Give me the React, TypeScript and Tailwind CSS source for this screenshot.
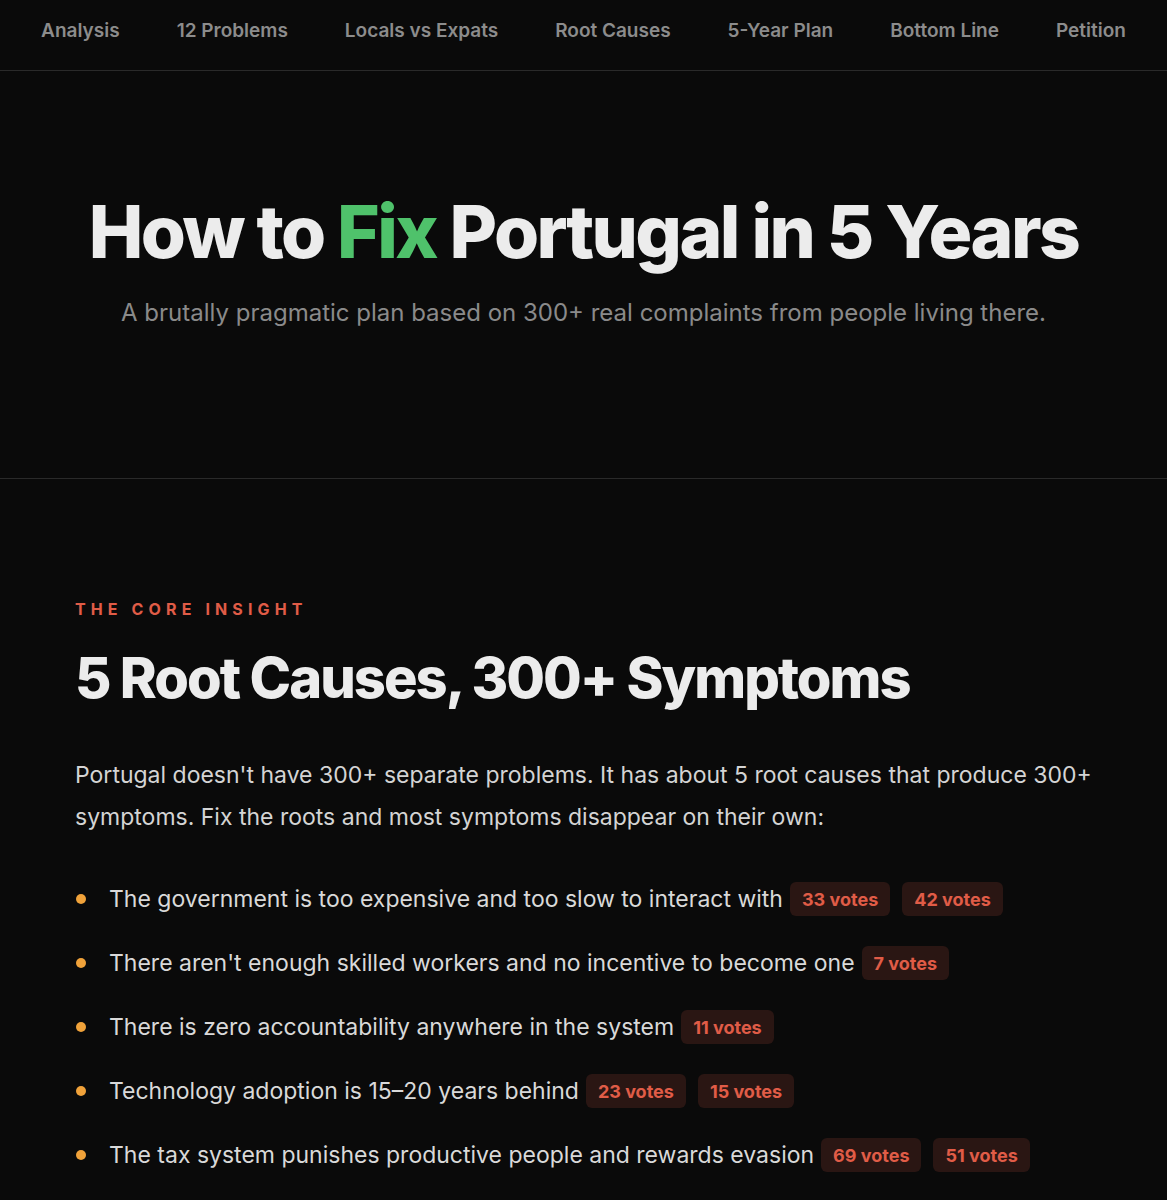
import React from 'react';

const navItems = [
  'Analysis',
  '12 Problems',
  'Locals vs Expats',
  'Root Causes',
  '5-Year Plan',
  'Bottom Line',
  'Petition',
];

const causes: { text: string; votes: number[] }[] = [
  { text: 'The government is too expensive and too slow to interact with', votes: [33, 42] },
  { text: "There aren't enough skilled workers and no incentive to become one", votes: [7] },
  { text: 'There is zero accountability anywhere in the system', votes: [11] },
  { text: 'Technology adoption is 15–20 years behind', votes: [23, 15] },
  { text: 'The tax system punishes productive people and rewards evasion', votes: [69, 51] },
];

const VoteBadge: React.FC<{ count: number }> = ({ count }) => (
  <span className="inline-flex items-center h-[34px] px-3 rounded-md bg-[#2a1613] text-[#e05c47] text-[18px] font-bold">
    {count} votes
  </span>
);

export default function App() {
  return (
    <div className="min-h-screen bg-[#0a0a0a] text-[#ececec] font-['Inter','Liberation_Sans',sans-serif]">
      {/* Top nav */}
      <nav className="h-[71px] border-b border-[#2a2a2a] flex items-center justify-center gap-[57px] pb-[8px]">
        {navItems.map((item) => (
          <a key={item} className="text-[19px] font-semibold text-[#8c8c8c] cursor-pointer">
            {item}
          </a>
        ))}
      </nav>

      {/* Hero */}
      <header className="h-[408px] border-b border-[#2a2a2a] flex flex-col items-center pt-[118px]">
        <h1 className="text-[73px] leading-[86px] font-extrabold tracking-[-0.035em] text-[#ececec]">
          How to <span className="text-[#4fc26b]">Fix</span> Portugal in 5 Years
        </h1>
        <p className="mt-[20px] text-[24px] text-[#8a8a8a]">
          A brutally pragmatic plan based on 300+ real complaints from people living there.
        </p>
      </header>

      {/* Core insight */}
      <section className="pl-[75px] pr-[60px] pt-[120px] pb-[60px]">
        <div className="text-[16px] font-bold tracking-[0.32em] text-[#e05c47] leading-[20px]">
          THE CORE INSIGHT
        </div>
        <h2 className="mt-[26px] text-[56px] leading-[66px] font-extrabold tracking-[-0.035em] text-[#ececec]">
          5 Root Causes, 300+ Symptoms
        </h2>
        <p className="mt-[43px] text-[23px] leading-[42px] text-[#d4d4d4]">
          Portugal doesn't have 300+ separate problems. It has about 5 root causes that produce 300+
          symptoms. Fix the roots and most symptoms disappear on their own:
        </p>
        <ul className="mt-[44px] flex flex-col gap-[30px]">
          {causes.map((c) => (
            <li key={c.text} className="flex items-center h-[34px] text-[23px] text-[#d9d9d9]">
              <span className="w-[10px] h-[10px] rounded-full bg-[#f0a23a] ml-[1px] mr-[23px] shrink-0" />
              <span>{c.text}</span>
              <span className="flex items-center gap-[12px] ml-[7px]">
                {c.votes.map((v, i) => (
                  <VoteBadge key={i} count={v} />
                ))}
              </span>
            </li>
          ))}
        </ul>
      </section>
    </div>
  );
}
